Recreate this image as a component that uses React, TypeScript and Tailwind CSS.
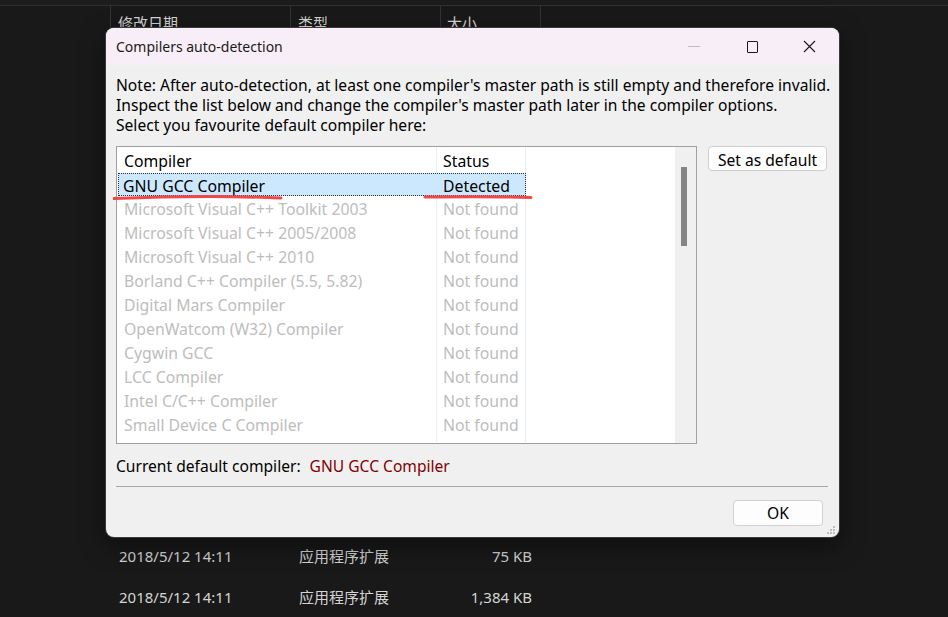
import React from 'react';

const compilers = [
  'Microsoft Visual C++ Toolkit 2003',
  'Microsoft Visual C++ 2005/2008',
  'Microsoft Visual C++ 2010',
  'Borland C++ Compiler (5.5, 5.82)',
  'Digital Mars Compiler',
  'OpenWatcom (W32) Compiler',
  'Cygwin GCC',
  'LCC Compiler',
  'Intel C/C++ Compiler',
  'Small Device C Compiler',
];

export default function App() {
  return (
    <div
      className="relative h-[617px] w-[948px] overflow-hidden bg-[#191919]"
      style={{ fontFamily: '"Noto Sans", "Noto Sans CJK SC", sans-serif' }}
    >
      {/* explorer behind the dialog */}
      <div className="h-[5px] bg-[#1c1c1c]" />
      <div className="h-px bg-[#2f2f2f]" />
      <div className="flex h-[30px] text-[15px] text-[#d4d4d4]">
        <div className="w-[111px] border-r border-[#333]" />
        <div className="w-[180px] border-r border-[#333] pl-[7px] pt-[6px]">修改日期</div>
        <div className="w-[150px] border-r border-[#333] pl-[7px] pt-[6px]">类型</div>
        <div className="w-[100px] border-r border-[#333] pl-[6px] pt-[6px]">大小</div>
      </div>
      <div className="h-[500px]" />
      <div>
        <div className="flex h-[41px] items-center text-[15px] text-[#d4d4d4]">
          <div className="w-[299px] pl-[119px]">2018/5/12 14:11</div>
          <div className="w-[120px]">应用程序扩展</div>
          <div className="w-[113px] text-right">75 KB</div>
        </div>
        <div className="flex h-[41px] items-center text-[15px] text-[#d4d4d4]">
          <div className="w-[299px] pl-[119px]">2018/5/12 14:11</div>
          <div className="w-[120px]">应用程序扩展</div>
          <div className="w-[113px] text-right">1,384 KB</div>
        </div>
      </div>

      {/* dialog window */}
      <div className="absolute left-[106px] top-[28px] flex h-[509px] w-[733px] flex-col overflow-hidden rounded-[8px] bg-[#f0f0f0] shadow-[0_0_0_1px_#3a3a3a,0_8px_24px_rgba(0,0,0,0.5)]">
        <div className="flex h-[37px] shrink-0 items-center bg-[#f7eef7] pl-[10px] text-[14px] text-[#1a1a1a]">
          <span className="flex-1">Compilers auto-detection</span>
          <div className="flex h-full items-center">
            <div className="flex w-[58px] justify-center">
              <div className="h-px w-[12px] bg-[#bdbdbd]" />
            </div>
            <div className="flex w-[58px] justify-center">
              <div className="h-[12px] w-[11px] rounded-[1px] border border-[#1a1a1a]" />
            </div>
            <div className="flex w-[58px] justify-center pr-[2px]">
              <svg width="13" height="13" viewBox="0 0 13 13">
                <path d="M1 1 L12 12 M12 1 L1 12" stroke="#1a1a1a" strokeWidth="1.1" />
              </svg>
            </div>
          </div>
        </div>

        <div className="flex flex-1 flex-col px-[10px] pt-[10px] text-[15.6px] text-black">
          <p className="leading-[20px] whitespace-nowrap">
            Note: After auto-detection, at least one compiler's master path is still empty and therefore invalid.
            <br />
            Inspect the list below and change the compiler's master path later in the compiler options.
            <br />
            Select you favourite default compiler here:
          </p>

          <div className="mt-[11px] flex gap-[11px]">
            <div className="relative flex h-[298px] w-[581px] border border-[#a0a0a0] bg-white text-[15.8px]">
              <div className="flex-1 pl-[1px]">
                <div className="flex h-[26px] items-center">
                  <div className="h-full w-[319px] border-r border-[#e8eef6] pl-[6px] pt-[3px]">Compiler</div>
                  <div className="h-full w-[89px] border-r border-[#e8eef6] pl-[6px] pt-[3px]">Status</div>
                </div>
                <div className="flex h-[23px] w-[408px] items-center border border-dotted border-[#333] bg-[#cce8ff] pt-[4px]">
                  <div className="w-[318px] pl-[4px]">GNU GCC Compiler</div>
                  <div className="pl-[6px]">Detected</div>
                </div>
                {compilers.map((c) => (
                  <div key={c} className="flex h-[24px] text-[#bdbdbd]">
                    <div className="flex h-full w-[319px] items-center border-r border-[#e8eef6] pl-[6px] pt-[3px]">{c}</div>
                    <div className="flex h-full w-[89px] items-center border-r border-[#e8eef6] pl-[6px] pt-[3px]">Not found</div>
                  </div>
                ))}
                <div className="flex h-[6px]">
                  <div className="w-[319px] border-r border-[#e8eef6]" />
                  <div className="w-[89px] border-r border-[#e8eef6]" />
                </div>
              </div>
              <div className="w-[21px] bg-[#f0f0f0] pt-[20px]">
                <div className="ml-[6px] h-[79px] w-[6px] bg-[#858585]" />
              </div>

              {/* red annotation strokes */}
              <svg className="pointer-events-none absolute left-[-4px] top-[46px]" width="430" height="12" viewBox="0 0 430 12">
                <path d="M1 5.5 C 50 3.5, 110 2.5, 168 5" fill="none" stroke="#f04848" strokeWidth="3" strokeLinecap="round" />
                <path d="M312 4 C 350 3.5, 390 3.5, 418 4.5" fill="none" stroke="#f04848" strokeWidth="3" strokeLinecap="round" />
              </svg>
            </div>
            <div>
              <button className="h-[25px] w-[119px] rounded-[4px] border border-[#cfcfcf] bg-[#fdfdfd] pt-[3px] text-[15.6px] leading-[18px] text-black">
                Set as default
              </button>
            </div>
          </div>

          <div className="mt-[12px] flex h-[22px] items-center">
            <span>Current default compiler:</span>
            <span className="ml-[9px] text-[#800000]">GNU GCC Compiler</span>
          </div>
          <div className="mt-[8px] h-px w-[712px] bg-[#a8a8a8]" />
          <div className="flex justify-end pr-[6px] pt-[13px]">
            <button className="h-[26px] w-[90px] rounded-[4px] border border-[#d0d0d0] bg-[#fdfdfd] pt-[1px] text-[15.6px] text-black">
              OK
            </button>
          </div>
        </div>

        {/* resize grip */}
        <svg className="absolute bottom-[2px] right-[3px]" width="10" height="10" viewBox="0 0 10 10">
          <rect x="7" y="1" width="2" height="2" fill="#bdbdbd" />
          <rect x="4" y="4" width="2" height="2" fill="#bdbdbd" />
          <rect x="7" y="4" width="2" height="2" fill="#bdbdbd" />
          <rect x="1" y="7" width="2" height="2" fill="#bdbdbd" />
          <rect x="4" y="7" width="2" height="2" fill="#bdbdbd" />
          <rect x="7" y="7" width="2" height="2" fill="#bdbdbd" />
        </svg>
      </div>
    </div>
  );
}
